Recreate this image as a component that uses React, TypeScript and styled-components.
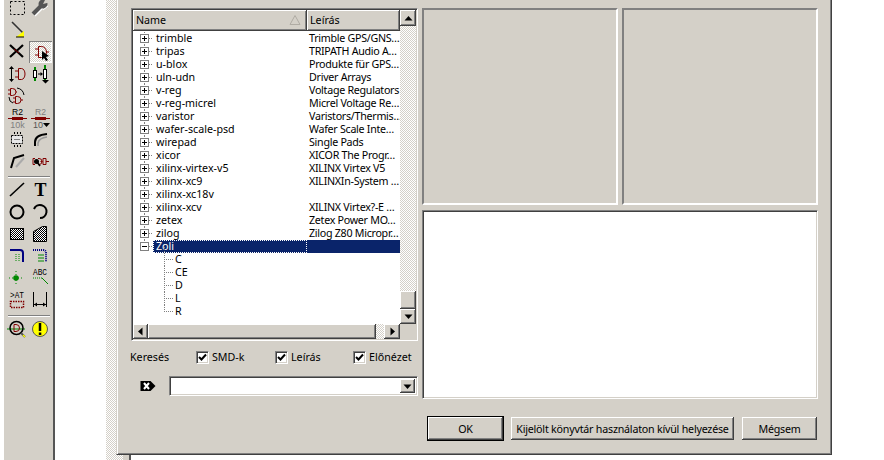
import React from 'react';
import styled, { createGlobalStyle, css } from 'styled-components';

const FACE = '#d4d0c8';

const GlobalStyle = createGlobalStyle`
  html, body {
    margin: 0;
    padding: 0;
    background: #fff;
    overflow: hidden;
  }
  body {
    font-family: "Noto Sans", "Liberation Sans", sans-serif;
    font-size: 10.7px;
    color: #000;
  }
`;

const hatch = css`
  background-image: conic-gradient(#fff 25%, ${FACE} 0 50%, #fff 0 75%, ${FACE} 0);
  background-size: 2px 2px;
`;

const raised = css`
  background-color: ${FACE};
  box-shadow: inset -1px -1px #404040, inset 1px 1px #fff, inset -2px -2px #808080;
`;

const sunken = css`
  box-sizing: border-box;
  border: 1px solid;
  border-color: #808080 #fff #fff #808080;
  box-shadow: inset 1px 1px #404040, inset -1px -1px ${FACE};
`;

const Desktop = styled.div`
  position: relative;
  width: 884px;
  height: 460px;
  display: flex;
  overflow: hidden;
  background: #fff;
`;

const Gutter = styled.div`
  width: 4px;
`;

const Toolbar = styled.div`
  box-sizing: border-box;
  width: 51px;
  height: 460px;
  padding: 0 0 0 2px;
  background: ${FACE};
  border-right: 2px solid #555;
  overflow: hidden;
`;

const ToolGrid = styled.div<{ $top?: number }>`
  display: grid;
  grid-template-columns: 23px 23px;
  grid-auto-rows: 22px;
  margin-top: ${(p) => p.$top ?? 0}px;
`;

const ToolDivider = styled.div<{ $top: number }>`
  width: 42px;
  height: 2px;
  margin: ${(p) => p.$top}px 0 1px 2px;
  background: #808080;
  border-bottom: 1px solid #fff;
  box-sizing: border-box;
`;

const ToolCell = styled.div<{ $active?: boolean }>`
  position: relative;
  width: 23px;
  height: 22px;
  ${(p) =>
    p.$active &&
    css`
      ${hatch}
      box-shadow: inset 1px 1px #808080, inset -1px -1px #fff;
    `}
`;

const Glyph = styled.svg`
  display: block;
  width: 23px;
  height: 22px;
`;

const Workspace = styled.div`
  width: 51px;
`;

const HatchStrip = styled.div`
  width: 17px;
  height: 460px;
  ${hatch}
`;

const SideStrip = styled.div`
  width: 6px;
  height: 460px;
  background: ${FACE};
  border-right: 2px solid #555;
`;

const Dialog = styled.div`
  position: absolute;
  left: 116px;
  top: 0;
  box-sizing: border-box;
  width: 716px;
  height: 455px;
  padding: 8px 0 0 14px;
  background: ${FACE};
  border-left: 1px solid ${FACE};
  border-right: 1px solid #404040;
  border-bottom: 1px solid #404040;
  box-shadow: inset 1px 0 #fff, inset -1px -1px #808080;
`;

const MainRow = styled.div`
  display: flex;
  gap: 4px;
  height: 391px;
`;

const LeftColumn = styled.div`
  width: 287px;
  display: flex;
  flex-direction: column;
`;

const RightColumn = styled.div`
  width: 396px;
  display: flex;
  flex-direction: column;
  gap: 5px;
`;

const ListFrame = styled.div`
  ${sunken}
  width: 287px;
  height: 333px;
  padding: 1px;
  display: grid;
  grid-template-columns: 267px 16px;
  grid-template-rows: 314px 15px;
`;

const ListPane = styled.div`
  background: #fff;
  overflow: hidden;
`;

const HeaderRow = styled.div`
  display: flex;
  height: 21px;
`;

const HeaderCell = styled.div<{ $width: number }>`
  ${raised}
  box-sizing: border-box;
  position: relative;
  width: ${(p) => p.$width}px;
  padding: 3px 0 0 3px;
  line-height: 15px;
`;

const SortMark = styled.svg`
  position: absolute;
  right: 6px;
  top: 4px;
  width: 12px;
  height: 12px;
`;

const TreeBody = styled.div`
  padding-top: 1px;
`;

const TreeRow = styled.div`
  position: relative;
  display: flex;
  height: 13px;
  line-height: 12px;
  padding-left: 7px;
`;

const ExpandBox = styled.div`
  box-sizing: border-box;
  position: relative;
  z-index: 1;
  width: 9px;
  height: 9px;
  margin-top: 2px;
  background: #fff;
  border: 1px solid #808080;
`;

const BoxBar = styled.i<{ $vertical?: boolean }>`
  position: absolute;
  background: #000;
  ${(p) =>
    p.$vertical
      ? css`left: 3px; top: 1px; width: 1px; height: 5px;`
      : css`left: 1px; top: 3px; width: 5px; height: 1px;`}
`;

const TrunkLine = styled.div<{ $left: number; $height: number; $top?: number }>`
  position: absolute;
  left: ${(p) => p.$left}px;
  top: ${(p) => p.$top ?? 0}px;
  width: 1px;
  height: ${(p) => p.$height}px;
  background-image: repeating-linear-gradient(to bottom, #808080 0 1px, transparent 1px 2px);
`;

const Twig = styled.div<{ $width: number }>`
  width: ${(p) => p.$width}px;
  height: 1px;
  margin-top: 6px;
  flex: none;
  background-image: repeating-linear-gradient(to right, #808080 0 1px, transparent 1px 2px);
`;

const NameCell = styled.div<{ $selected?: boolean; $width: number }>`
  box-sizing: border-box;
  width: ${(p) => p.$width}px;
  padding-left: 3px;
  white-space: nowrap;
  ${(p) =>
    p.$selected &&
    css`
      background: #0a246a;
      color: #fff;
      outline: 1px dotted #fff;
      outline-offset: -1px;
    `}
`;

const DescCell = styled.div<{ $selected?: boolean }>`
  width: 93px;
  padding-left: 2px;
  box-sizing: border-box;
  white-space: nowrap;
  letter-spacing: -0.28px;
  ${(p) => p.$selected && css`background: #0a246a;`}
`;

const ChildRow = styled.div`
  position: relative;
  display: flex;
  height: 13px;
  line-height: 12px;
  padding-left: 31px;
`;

const ChildName = styled.div`
  padding-left: 2px;
`;

const VScroll = styled.div`
  display: flex;
  flex-direction: column;
  height: 314px;
`;

const ScrollButton = styled.div<{ $height?: number; $width?: number }>`
  ${raised}
  flex: none;
  width: ${(p) => p.$width ?? 16}px;
  height: ${(p) => p.$height ?? 16}px;
  display: flex;
  align-items: center;
  justify-content: center;
`;

const ScrollTrack = styled.div`
  flex: 1;
  ${hatch}
`;

const HScroll = styled.div`
  display: flex;
  height: 15px;
`;

const Corner = styled.div`
  background: ${FACE};
`;

const Arrow = styled.svg`
  display: block;
  width: 9px;
  height: 9px;
`;

const SearchRow = styled.div`
  display: flex;
  align-items: center;
  height: 14px;
  margin: 9px 0 0 -1px;
`;

const SearchLabel = styled.div`
  width: 66px;
`;

const CheckItem = styled.label<{ $width: number }>`
  display: flex;
  align-items: center;
  gap: 3px;
  width: ${(p) => p.$width}px;
  flex: none;
`;

const CheckMark = styled.div`
  ${sunken}
  width: 13px;
  height: 13px;
  flex: none;
  background: #fff;
`;

const ComboRow = styled.div`
  display: flex;
  align-items: center;
  margin-top: 12px;
`;

const TagIcon = styled.svg`
  width: 16px;
  height: 12px;
  margin: 0 13px 0 9px;
  flex: none;
`;

const Combo = styled.div`
  ${sunken}
  width: 249px;
  height: 20px;
  padding: 2px;
  background: #fff;
  display: flex;
  justify-content: flex-end;
`;

const PreviewRow = styled.div`
  display: flex;
  gap: 4px;
  height: 197px;
`;

const PreviewPane = styled.div`
  box-sizing: border-box;
  width: 196px;
  border: 2px solid;
  border-color: #808080 #fff #fff #808080;
`;

const FootprintPane = styled.div`
  ${sunken}
  flex: 1;
  background: #fff;
`;

const Footer = styled.div`
  display: flex;
  align-items: center;
  height: 25px;
  margin: 17px 0 0 296px;
`;

const Button = styled.button<{ $width: number; $default?: boolean; $left?: number }>`
  ${raised}
  width: ${(p) => p.$width}px;
  height: ${(p) => (p.$default ? 25 : 23)}px;
  margin-left: ${(p) => p.$left ?? 0}px;
  padding: 0;
  border: ${(p) => (p.$default ? '1px solid #000' : 'none')};
  font: inherit;
  color: #000;
  white-space: nowrap;
  letter-spacing: -0.22px;
`;

const Dither = () => (
  <defs>
    <pattern id="dith" width="2" height="2" patternUnits="userSpaceOnUse">
      <rect width="2" height="2" fill="#fff" />
      <rect width="1" height="1" fill="#000" />
      <rect x="1" y="1" width="1" height="1" fill="#000" />
    </pattern>
  </defs>
);

const GATE = '#800000';

function ToolText({
  x,
  y,
  size,
  weight,
  fill,
  family,
  fit,
  children,
}: {
  x: string;
  y: string;
  size: number;
  weight?: number;
  fill?: string;
  family?: string;
  fit?: number;
  children: React.ReactNode;
}) {
  return (
    <text
      x={x}
      y={y}
      fontSize={size}
      fontWeight={weight ?? 400}
      fill={fill ?? '#000'}
      fontFamily={family ?? 'Liberation Sans'}
      textAnchor="middle"
      textLength={fit}
      lengthAdjust={fit ? 'spacingAndGlyphs' : undefined}
    >
      {children}
    </text>
  );
}

const tools: (React.ReactNode | null)[][] = [
  [
    <rect x="4.500" y="4.500" width="14" height="13" fill="none" stroke="#000" strokeDasharray="2 2" />,
    <>
      <path d="M5 18 L13 10" stroke="#fff" strokeWidth="4" />
      <path d="M4 17 L12 9" stroke="#555" strokeWidth="4" />
      <circle cx="14" cy="7" r="4.500" fill="#555" />
      <path d="M14 7 L17 1 L22 5 Z" fill={FACE} />
      <path d="M19 9 L14 13" stroke="#fff" />
    </>,
  ],
  [
    <>
      <path d="M6 3 L17 14" stroke="#333" strokeWidth="1.600" />
      <path d="M10 18 L18 18 L18 12 Z" fill="#ff0" />
      <path d="M10 18 L18 18" stroke="#000" />
    </>,
    null,
  ],
  [
    <>
      <path d="M4 4 L17 16 M17 4 L4 16" stroke="#000" strokeWidth="2.200" />
      <path d="M8 8 L13 12" stroke={GATE} />
    </>,
    <>
      <path d="M9.500 5.500 h3 a4.500 5 0 0 1 0 11 h-3 z" fill="none" stroke={GATE} />
      <path d="M6 8 h3 M6 14 h3 M17 11 h3" stroke={GATE} />
      <path d="M13 10 L20 15 L17 16 L19 19 L17 20 L15 17 L13 19 Z" fill="#000" />
    </>,
  ],
  [
    <>
      <path d="M5.500 5 V17" stroke="#000" />
      <path d="M5.500 3 L3 6 H8 Z M5.500 19 L3 16 H8 Z" fill="#000" />
      <path d="M12.500 5.500 h3 a3.500 5.500 0 0 1 0 11 h-3 z" fill="none" stroke={GATE} />
      <path d="M9 8 h3 M9 14 h3" stroke={GATE} />
    </>,
    <>
      <rect x="4.500" y="7.500" width="3" height="7" fill="#fff" stroke="#000" />
      <rect x="14.500" y="6.500" width="3" height="9" fill="#fff" stroke="#000" />
      <path d="M5 4 h2 v3 h-2 z M5 15 h2 v3 h-2 z M15 2 h2 v4 h-2 z M15 16 h2 v2 h-2 z" fill="#080" />
      <path d="M9 11 h4" stroke="#000" />
      <path d="M14 11 L11.500 9 V13 Z M13 17 h7 l-3.500 3.500 z" fill="#000" />
    </>,
  ],
  [
    <>
      <path d="M4.500 3.500 h2 a3 3 0 0 1 0 7 h-2 z" fill="none" stroke={GATE} />
      <path d="M2 5 h2 M2 9 h2 M10 7 h1" stroke={GATE} />
      <path d="M9.500 11.500 h2 a3 3 0 0 1 0 7 h-2 z" fill="none" stroke={GATE} />
      <path d="M7 13 h2 M7 17 h2 M15 15 h2" stroke={GATE} />
      <path d="M11 3 Q17 4 18 10 M7 18 Q3 17 3 12" fill="none" stroke="#000" />
    </>,
    null,
  ],
  [
    <>
      <ToolText x="11.500" y="8" size={9} fit={11}>R2</ToolText>
      <path d="M2 11.500 h19" stroke={GATE} />
      <rect x="6" y="10" width="11" height="3" fill={GATE} />
      <ToolText x="11.500" y="21" size={9} fill="#808080">10k</ToolText>
    </>,
    <>
      <ToolText x="11.500" y="8" size={9} fill="#808080" fit={11}>R2</ToolText>
      <path d="M2 11.500 h19" stroke={GATE} />
      <rect x="6" y="10" width="11" height="3" fill={GATE} />
      <ToolText x="9" y="21" size={9} fill="#555">10</ToolText>
      <path d="M14 16 h7 l-3.500 4 z" fill="#000" />
    </>,
  ],
  [
    <>
      <rect x="5.500" y="6.500" width="11" height="8" fill="#e8e8e8" stroke="#000" strokeDasharray="2 1" />
      <path d="M8 4 h1 M11 4 h1 M14 4 h1 M8 17 h1 M11 17 h1 M14 17 h1" stroke="#000" strokeWidth="2" />
      <path d="M8 10.500 h6" stroke="#808080" />
    </>,
    <>
      <path d="M6 17 V13 Q6 6 18 5" fill="none" stroke="#000" strokeWidth="2" />
      <path d="M9 17 V14 Q10 9 18 8" fill="none" stroke="#999" strokeWidth="1.500" />
    </>,
  ],
  [
    <>
      <path d="M5 17 L8 7 L18 4" fill="none" stroke="#000" strokeWidth="2" />
      <path d="M10 16 L18 7" stroke="#aaa" strokeWidth="2" />
    </>,
    <>
      <path d="M6 7.500 h-2 v6 h2 M9 7.500 h1 a3 3 0 0 1 0 6 h-1" fill="none" stroke={GATE} />
      <path d="M14 7.500 h3 v6 h-3 z" fill="none" stroke={GATE} />
      <path d="M11.500 10.500 h2 M17 10.500 h3" stroke={GATE} />
      <circle cx="7.500" cy="10.500" r="2.500" fill="#000" />
      <path d="M8 11 L11 15" stroke="#000" strokeWidth="1.500" />
    </>,
  ],
  [
    <path d="M4 17 L18 4" stroke="#000" strokeWidth="1.600" />,
    <ToolText x="11.500" y="17" size={18} weight={700} family="Liberation Serif">T</ToolText>,
  ],
  [
    <circle cx="11" cy="11" r="6.500" fill="none" stroke="#000" strokeWidth="2" />,
    <path d="M5 8 A 6.500 6.500 0 1 1 11 17" fill="none" stroke="#000" strokeWidth="2" />,
  ],
  [
    <>
      <Dither />
      <rect x="4.500" y="5.500" width="13" height="11" fill="url(#dith)" stroke="#000" />
    </>,
    <path d="M4.500 8.500 L13.500 3.500 H17.500 V18.500 H4.500 Z" fill="url(#dith)" stroke="#000" />,
  ],
  [
    <>
      <path d="M4 5 H14 Q17 5 17 8 V17" fill="none" stroke="#000080" strokeWidth="2" />
      <path d="M10 9 V17 M13 9 V17" stroke="#080" strokeDasharray="1 1" />
    </>,
    <>
      <path d="M4 5 H14 Q17 5 17 8 V17" fill="none" stroke="#000080" strokeWidth="2" strokeDasharray="1 1" />
      <path d="M9 10 H15 M9 13 H15 M9 16 H15" stroke="#080" />
    </>,
  ],
  [
    <>
      <circle cx="10" cy="11" r="2.800" fill="#080" />
      <path d="M3 11 H17 M10 4 V18" stroke="#080" strokeDasharray="1 2" />
    </>,
    <>
      <ToolText x="11" y="8" size={9} family="Liberation Mono" fit={14}>ABC</ToolText>
      <path d="M4 11 H14" stroke="#080" strokeDasharray="1 1" />
      <path d="M13 11 L19 17" stroke="#080" />
    </>,
  ],
  [
    <>
      <ToolText x="11" y="9" size={9} family="Liberation Mono" fit={14}>&gt;AT</ToolText>
      <rect x="4.500" y="12.500" width="13" height="6" fill="none" stroke={GATE} strokeWidth="1.500" strokeDasharray="1.500 1" />
    </>,
    <>
      <path d="M4.500 3 V18 M17.500 3 V18 M5 15.500 H17" stroke="#000" />
      <path d="M5 15.500 L8 13.500 V17.500 Z M17 15.500 L14 13.500 V17.500 Z" fill="#000" />
    </>,
  ],
  [
    <>
      <path d="M1 11 H19" stroke="#080" />
      <circle cx="10.500" cy="10" r="6.500" fill="none" stroke="#000" strokeWidth="1.500" />
      <path d="M8 6.500 h2 a3.500 3.500 0 0 1 0 7 h-2 z" fill="none" stroke={GATE} />
      <path d="M15 15 L19 19" stroke="#555" strokeWidth="2" />
      <path d="M17 17 L19 19" stroke="#ff0" strokeWidth="1.500" />
    </>,
    <>
      <circle cx="11" cy="11" r="7.500" fill="#ff0" stroke="#555" />
      <path d="M11 5 V13" stroke="#000" strokeWidth="2.500" />
      <rect x="9.800" y="14.500" width="2.500" height="2.500" fill="#000" />
    </>,
  ],
];

const libraries = [
  ['trimble', 'Trimble GPS/GNS…'],
  ['tripas', 'TRIPATH Audio A…'],
  ['u-blox', 'Produkte für GPS…'],
  ['uln-udn', 'Driver Arrays'],
  ['v-reg', 'Voltage Regulators'],
  ['v-reg-micrel', 'Micrel Voltage Re…'],
  ['varistor', 'Varistors/Thermis…'],
  ['wafer-scale-psd', 'Wafer Scale Inte…'],
  ['wirepad', 'Single Pads'],
  ['xicor', 'XICOR The Progr…'],
  ['xilinx-virtex-v5', 'XILINX Virtex V5'],
  ['xilinx-xc9', 'XILINXIn-System …'],
  ['xilinx-xc18v', ''],
  ['xilinx-xcv', 'XILINX Virtex?-E …'],
  ['zetex', 'Zetex Power MO…'],
  ['zilog', 'Zilog Z80 Micropr…'],
];

const parts = ['C', 'CE', 'D', 'L', 'R'];

const renderTools = (start: number, end: number) =>
  tools.slice(start, end).flatMap((row, r) =>
    row.map((icon, c) => (
      <ToolCell key={`${start + r}-${c}`} $active={start + r === 2 && c === 1}>
        {icon && <Glyph viewBox="0 0 23 22">{icon}</Glyph>}
      </ToolCell>
    )),
  );

const Up = () => (
  <Arrow viewBox="0 0 9 9">
    <path d="M4.500 2 L8.500 6.500 H0.500 Z" fill="#000" />
  </Arrow>
);
const Down = () => (
  <Arrow viewBox="0 0 9 9">
    <path d="M4.500 7 L8.500 2.500 H0.500 Z" fill="#000" />
  </Arrow>
);
const Left = () => (
  <Arrow viewBox="0 0 9 9">
    <path d="M2 4.500 L6.500 0.500 V8.500 Z" fill="#000" />
  </Arrow>
);
const Right = () => (
  <Arrow viewBox="0 0 9 9">
    <path d="M7 4.500 L2.500 0.500 V8.500 Z" fill="#000" />
  </Arrow>
);

const Check = () => (
  <svg viewBox="0 0 11 11" width="11" height="11" style={{ display: 'block' }}>
    <path d="M2 5 L4.500 7.500 L9 2.500" fill="none" stroke="#000" strokeWidth="2" />
  </svg>
);

export default function App() {
  return (
    <Desktop>
      <GlobalStyle />
      <Gutter />
      <Toolbar>
        <ToolGrid $top={-3}>{renderTools(0, 8)}</ToolGrid>
        <ToolDivider $top={3} />
        <ToolGrid>{renderTools(8, 14)}</ToolGrid>
        <ToolDivider $top={4} />
        <ToolGrid>{renderTools(14, 15)}</ToolGrid>
      </Toolbar>
      <Workspace />
      <HatchStrip />
      <SideStrip />

      <Dialog>
        <MainRow>
          <LeftColumn>
            <ListFrame>
              <ListPane>
                <HeaderRow>
                  <HeaderCell $width={174}>
                    Name
                    <SortMark viewBox="0 0 12 12">
                      <path d="M6 1.500 L11 10.500 H1 Z" fill="none" stroke="#b0aca4" />
                    </SortMark>
                  </HeaderCell>
                  <HeaderCell $width={93}>Leírás</HeaderCell>
                </HeaderRow>
                <TreeBody>
                  {libraries.map(([name, desc]) => (
                    <TreeRow key={name}>
                      <TrunkLine $left={11} $height={13} />
                      <ExpandBox>
                        <BoxBar />
                        <BoxBar $vertical />
                      </ExpandBox>
                      <Twig $width={4} />
                      <NameCell $width={154}>{name}</NameCell>
                      <DescCell>{desc}</DescCell>
                    </TreeRow>
                  ))}
                  <TreeRow>
                    <TrunkLine $left={11} $height={3} />
                    <TrunkLine $left={31} $height={6} $top={7} />
                    <ExpandBox>
                      <BoxBar />
                    </ExpandBox>
                    <Twig $width={4} />
                    <NameCell $width={154} $selected>Zoli</NameCell>
                    <DescCell $selected />
                  </TreeRow>
                  {parts.map((part, i) => (
                    <ChildRow key={part}>
                      <TrunkLine $left={31} $height={i === parts.length - 1 ? 7 : 13} />
                      <Twig $width={9} />
                      <ChildName>{part}</ChildName>
                    </ChildRow>
                  ))}
                </TreeBody>
              </ListPane>
              <VScroll>
                <ScrollButton><Up /></ScrollButton>
                <ScrollTrack />
                <ScrollButton $height={18} />
                <ScrollButton $height={15}><Down /></ScrollButton>
              </VScroll>
              <HScroll>
                <ScrollButton $width={15} $height={15}><Left /></ScrollButton>
                <ScrollButton $width={228} $height={15} />
                <ScrollTrack />
                <ScrollButton $width={16} $height={15}><Right /></ScrollButton>
              </HScroll>
              <Corner />
            </ListFrame>

            <SearchRow>
              <SearchLabel>Keresés</SearchLabel>
              <CheckItem $width={79}>
                <CheckMark><Check /></CheckMark>
                SMD-k
              </CheckItem>
              <CheckItem $width={78}>
                <CheckMark><Check /></CheckMark>
                Leírás
              </CheckItem>
              <CheckItem $width={62}>
                <CheckMark><Check /></CheckMark>
                Előnézet
              </CheckItem>
            </SearchRow>

            <ComboRow>
              <TagIcon viewBox="0 0 16 12">
                <path d="M0.500 1 H10.500 L15.500 6 L10.500 11 H0.500 Z" fill="#000" />
                <path d="M4 3 L9 9 M9 3 L4 9" stroke="#fff" strokeWidth="2" />
              </TagIcon>
              <Combo>
                <ScrollButton $width={15} $height={14}><Down /></ScrollButton>
              </Combo>
            </ComboRow>
          </LeftColumn>

          <RightColumn>
            <PreviewRow>
              <PreviewPane />
              <PreviewPane />
            </PreviewRow>
            <FootprintPane />
          </RightColumn>
        </MainRow>

        <Footer>
          <Button $width={77} $default>OK</Button>
          <Button $width={223} $left={7}>Kijelölt könyvtár használaton kívül helyezése</Button>
          <Button $width={75} $left={8}>Mégsem</Button>
        </Footer>
      </Dialog>
    </Desktop>
  );
}
